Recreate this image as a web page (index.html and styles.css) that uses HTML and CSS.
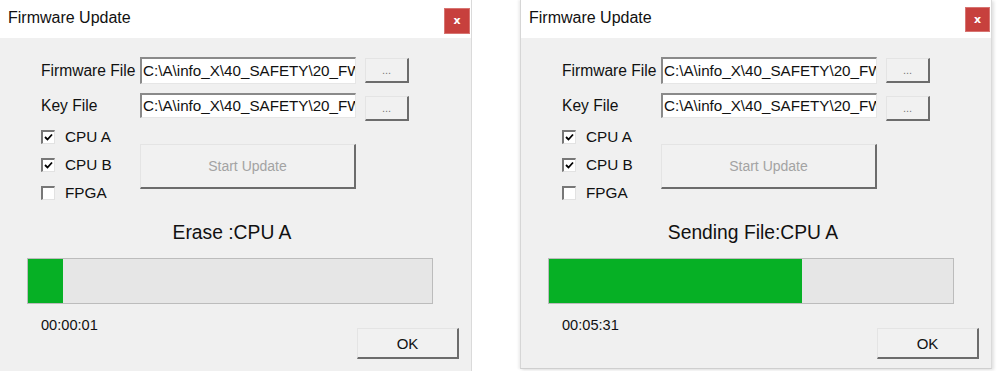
FILE: index.html
```html
<!DOCTYPE html>
<html lang="en">
<head>
    <meta charset="UTF-8">
    <title>Firmware Update</title>
    <link rel="stylesheet" href="styles.css">
</head>
<body>
    <div class="desk">

        <!-- Dialog 1: erase phase -->
        <div class="dialog dialog-left">
            <div class="titlebar">
                <span class="title">Firmware Update</span>
                <button class="close">x</button>
            </div>
            <div class="client">
                <div class="file-rows">
                    <div class="file-row">
                        <span class="label">Firmware File</span>
                        <div class="field">C:\A\info_X\40_SAFETY\20_FW</div>
                        <button class="btn btn-browse">...</button>
                    </div>
                    <div class="file-row row-key">
                        <span class="label">Key File</span>
                        <div class="field">C:\A\info_X\40_SAFETY\20_FW</div>
                        <button class="btn btn-browse">...</button>
                    </div>
                </div>
                <div class="options">
                    <div class="checks">
                        <div class="check"><span class="box"><svg width="9" height="9" viewBox="0 0 9 9"><polyline points="1,4 3.5,6.5 8,1.5" fill="none" stroke="#000" stroke-width="1.8"/></svg></span>CPU A</div>
                        <div class="check"><span class="box"><svg width="9" height="9" viewBox="0 0 9 9"><polyline points="1,4 3.5,6.5 8,1.5" fill="none" stroke="#000" stroke-width="1.8"/></svg></span>CPU B</div>
                        <div class="check"><span class="box"></span>FPGA</div>
                    </div>
                    <button class="btn btn-start">Start Update</button>
                </div>
                <div class="status">Erase :CPU A</div>
                <div class="progress"><div class="progress-fill" style="width: 8.6%"></div></div>
                <div class="footer">
                    <span class="elapsed">00:00:01</span>
                    <button class="btn btn-ok">OK</button>
                </div>
            </div>
        </div>

        <!-- Dialog 2: sending phase -->
        <div class="dialog dialog-right">
            <div class="titlebar">
                <span class="title">Firmware Update</span>
                <button class="close">x</button>
            </div>
            <div class="client">
                <div class="file-rows">
                    <div class="file-row">
                        <span class="label">Firmware File</span>
                        <div class="field">C:\A\info_X\40_SAFETY\20_FW</div>
                        <button class="btn btn-browse">...</button>
                    </div>
                    <div class="file-row row-key">
                        <span class="label">Key File</span>
                        <div class="field">C:\A\info_X\40_SAFETY\20_FW</div>
                        <button class="btn btn-browse">...</button>
                    </div>
                </div>
                <div class="options">
                    <div class="checks">
                        <div class="check"><span class="box"><svg width="9" height="9" viewBox="0 0 9 9"><polyline points="1,4 3.5,6.5 8,1.5" fill="none" stroke="#000" stroke-width="1.8"/></svg></span>CPU A</div>
                        <div class="check"><span class="box"><svg width="9" height="9" viewBox="0 0 9 9"><polyline points="1,4 3.5,6.5 8,1.5" fill="none" stroke="#000" stroke-width="1.8"/></svg></span>CPU B</div>
                        <div class="check"><span class="box"></span>FPGA</div>
                    </div>
                    <button class="btn btn-start">Start Update</button>
                </div>
                <div class="status">Sending File:CPU A</div>
                <div class="progress"><div class="progress-fill" style="width: 62.5%"></div></div>
                <div class="footer">
                    <span class="elapsed">00:05:31</span>
                    <button class="btn btn-ok">OK</button>
                </div>
            </div>
        </div>

    </div>
</body>
</html>
```

FILE: styles.css
```css
/* Base */
* {
    margin: 0;
    padding: 0;
    box-sizing: border-box;
}

body {
    background-color: #fff;
    color: #111;
    font-family: 'Liberation Sans', Arial, sans-serif;
    height: 371px;
    overflow: hidden;
}

.desk {
    display: flex;
    align-items: flex-start;
    gap: 48px;
}

/* Dialog window */
.dialog {
    width: 472px;
    display: flex;
    flex-direction: column;
    background-color: #f0f0f0;
    border-right: 1px solid #dadada;
}

.dialog-left {
    height: 380px;
}

.dialog-right {
    height: 369px;
    border-left: 1px solid #d6d6d6;
    border-bottom: 1px solid #cfcfcf;
    box-shadow: -2px 0 2px rgba(0, 0, 0, 0.06), 2px 1px 3px rgba(0, 0, 0, 0.12);
}

.titlebar {
    height: 38px;
    background-color: #fff;
    display: flex;
    justify-content: space-between;
    align-items: flex-start;
    padding: 0 1px 0 8px;
}

.title {
    font-size: 16px;
    line-height: 36px;
    color: #111;
}

.close {
    width: 26px;
    height: 26px;
    margin-top: 8px;
    background-color: #c7403d;
    border: 1px solid #d77471;
    color: #fff;
    font-family: 'DejaVu Sans', sans-serif;
    font-weight: bold;
    font-size: 11px;
    line-height: 22px;
}

.dialog-right .close {
    margin-top: 7px;
    width: 25px;
    height: 25px;
}

.client {
    padding-left: 27px;
    display: flex;
    flex-direction: column;
}

/* File rows */
.file-rows {
    margin-top: 19px;
    margin-left: 14px;
    display: flex;
    flex-direction: column;
    gap: 9px;
}

.file-row {
    display: flex;
    align-items: flex-start;
}

.label {
    width: 99px;
    font-size: 15.6px;
    line-height: 27px;
    white-space: nowrap;
}

.field {
    width: 216px;
    height: 27px;
    background-color: #fff;
    border-top: 2px solid #8a8a8a;
    border-left: 2px solid #8a8a8a;
    border-right: 1px solid #e6e6e6;
    border-bottom: 1px solid #e6e6e6;
    font-size: 15.2px;
    line-height: 23px;
    padding-left: 1px;
    white-space: nowrap;
    overflow: hidden;
}

.row-key .field {
    height: 25px;
    line-height: 21px;
}

.row-key .label {
    line-height: 25px;
}

/* Buttons */
.btn {
    background-color: #f1f1f1;
    border-top: 1px solid #e4e4e4;
    border-left: 1px solid #e4e4e4;
    border-right: 2px solid #6c6c6c;
    border-bottom: 2px solid #6c6c6c;
    font-family: 'Liberation Sans', Arial, sans-serif;
    color: #111;
}

.btn-browse {
    width: 44px;
    height: 25px;
    margin-left: 9px;
    margin-top: 1px;
    font-size: 11px;
    color: #7a7a7a;
    line-height: 20px;
}

.row-key .btn-browse {
    margin-top: 3px;
}

.btn-start {
    width: 216px;
    height: 45px;
    margin-top: 21px;
    font-size: 14px;
    color: #a3a3a3;
}

.btn-ok {
    width: 102px;
    height: 31px;
    margin-left: auto;
    margin-right: 12px;
    margin-top: 24px;
    font-size: 15px;
}

/* Checkboxes */
.options {
    display: flex;
    align-items: flex-start;
    margin-left: 14px;
    margin-top: 2px;
}

.checks {
    width: 99px;
    display: flex;
    flex-direction: column;
}

.check {
    height: 28px;
    display: flex;
    align-items: center;
    font-size: 15.3px;
}

.box {
    width: 14px;
    height: 14px;
    margin-right: 10px;
    background-color: #fff;
    border-top: 2px solid #777;
    border-left: 2px solid #777;
    border-right: 1px solid #e2e2e2;
    border-bottom: 1px solid #e2e2e2;
    display: flex;
    align-items: center;
    justify-content: center;
}

/* Status and progress */
.status {
    width: 406px;
    margin-top: 14px;
    padding-left: 4px;
    text-align: center;
    font-size: 19.3px;
    line-height: 24px;
}

.progress {
    width: 406px;
    height: 46px;
    margin-top: 13px;
    background-color: #e6e6e6;
    border: 1px solid #bcbcbc;
}

.progress-fill {
    height: 100%;
    background-color: #06b025;
}

.footer {
    display: flex;
    align-items: flex-start;
}

.elapsed {
    margin-left: 14px;
    margin-top: 13px;
    font-size: 14.6px;
}
```
